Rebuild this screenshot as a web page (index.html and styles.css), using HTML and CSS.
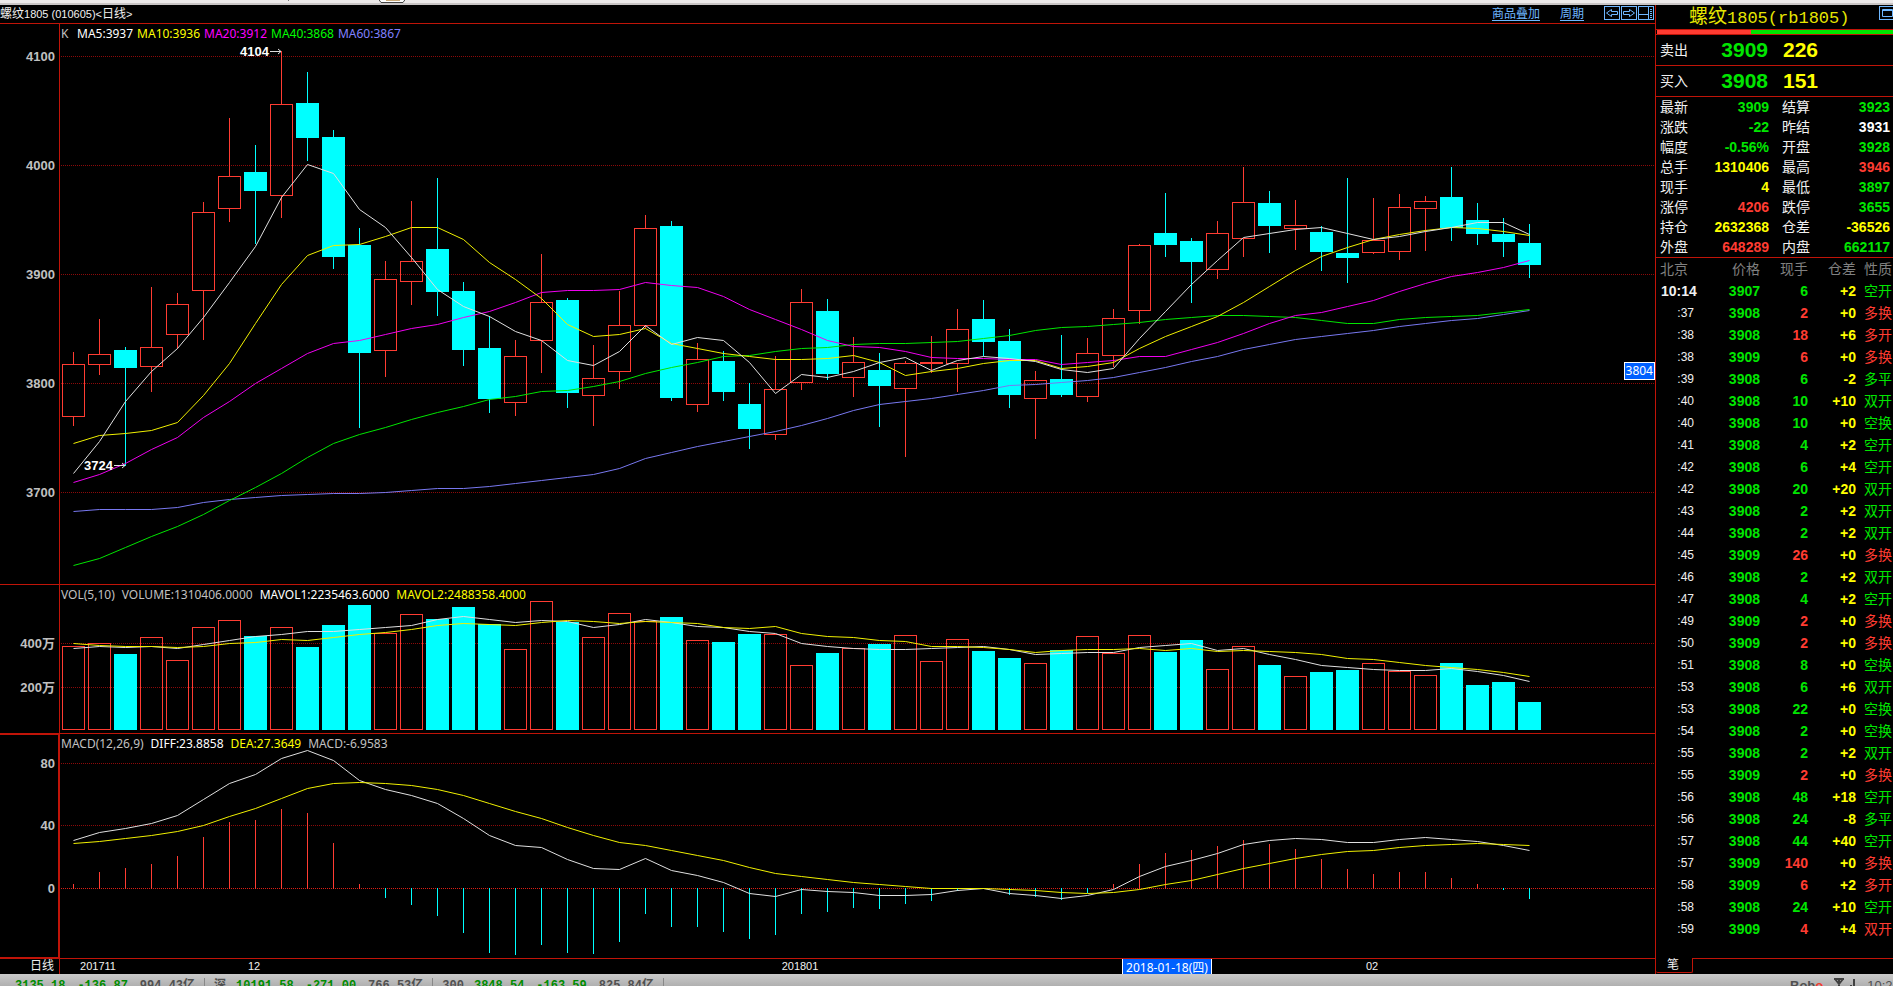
FILE: index.html
```html
<!DOCTYPE html>
<html lang="zh-CN">
<head>
<meta charset="utf-8">
<title>螺纹1805 日线</title>
<link rel="stylesheet" href="styles.css">
</head>
<body>
<div class="window-edge" aria-hidden="true">
  <svg class="edge-art" width="420" height="4">
    <rect class="edge-tick" x="288" y="0" width="1" height="1"/>
    <path class="edge-tab" d="M378.5 -1 L381 2.5 H403 L405.5 -1 Z"/>
    <rect class="edge-fill" x="386" y="0" width="14" height="1"/>
  </svg>
</div>

<div class="workspace">
  <main class="charts">
    <header class="chart-bar">
      <h1 class="chart-title">螺纹<span class="latin">1805 (010605)&lt;</span>日线<span class="latin">&gt;</span></h1>
      <nav class="chart-tools">
        <a class="tool-link" href="#overlay">商品叠加</a>
        <a class="tool-link" href="#period">周期</a>
        <div class="tool-icons">
          <button class="icon-button" type="button" aria-label="向左"><svg width="16" height="14"><rect x=".5" y=".5" width="15" height="13"/><path d="M7.5 3.5 L2.5 7 L7.5 10.5 V8.5 H13.5 V5.5 H7.5 Z"/></svg></button>
          <button class="icon-button" type="button" aria-label="向右"><svg width="16" height="14"><rect x=".5" y=".5" width="15" height="13"/><path d="M8.5 3.5 L13.5 7 L8.5 10.5 V8.5 H2.5 V5.5 H8.5 Z"/></svg></button>
          <button class="icon-button" type="button" aria-label="布局"><svg width="16" height="14"><rect x=".5" y=".5" width="15" height="13"/><path d="M10.5 0 V14 M0 8.5 H10 M12 3.5 H14 M12 5.5 H14 M12 7.5 H14 M12 9.5 H14 M12 11.5 H14"/></svg></button>
        </div>
      </nav>
    </header>

    <section class="pane pane-price" aria-label="K线">
      <svg class="plot" id="price"></svg>
      <p class="legend legend-tight"><span class="dim legend-k">K</span><span class="white">MA5:3937</span><span class="yellow">MA10:3936</span><span class="magenta">MA20:3912</span><span class="lime">MA40:3868</span><span class="violet">MA60:3867</span></p>
      <output class="price-tag">3804</output>
    </section>
    <section class="pane pane-volume" aria-label="成交量">
      <svg class="plot" id="volume"></svg>
      <p class="legend"><span class="dim">VOL(5,10)</span><span class="dim">VOLUME:1310406.0000</span><span class="white">MAVOL1:2235463.6000</span><span class="yellow">MAVOL2:2488358.4000</span></p>
    </section>
    <section class="pane pane-macd" aria-label="MACD">
      <svg class="plot" id="macd"></svg>
      <p class="legend"><span class="dim">MACD(12,26,9)</span><span class="white">DIFF:23.8858</span><span class="yellow">DEA:27.3649</span><span class="dim">MACD:-6.9583</span></p>
    </section>
    <footer class="timeline">
      <span class="timeline-unit">日线</span>
      <svg class="timeline-dates" id="dates"></svg>
    </footer>
  </main>

  <aside class="quote">
    <header class="quote-head">
      <h2 class="quote-title">螺纹<span class="quote-code">1805(rb1805)</span></h2>
      <button class="icon-button quote-window" type="button" aria-label="窗口"><svg width="16" height="14"><rect x=".5" y=".5" width="15" height="13"/><path d="M3.5 3.5 H13.5 V10.5 H3.5 Z M3 4.5 H14"/></svg></button>
    </header>
    <div class="ratio" aria-hidden="true"><div class="ratio-sell"></div><div class="ratio-buy"></div></div>
    <div class="level"><span class="level-name">卖出</span><span class="level-price green">3909</span><span class="level-size yellow">226</span></div>
    <div class="level"><span class="level-name">买入</span><span class="level-price green">3908</span><span class="level-size yellow">151</span></div>
    <table class="facts">
      <tbody>
        <tr><th>最新</th><td class="green">3909</td><th>结算</th><td class="green">3923</td></tr>
        <tr><th>涨跌</th><td class="green">-22</td><th>昨结</th><td class="white">3931</td></tr>
        <tr><th>幅度</th><td class="green">-0.56%</td><th>开盘</th><td class="green">3928</td></tr>
        <tr><th>总手</th><td class="yellow">1310406</td><th>最高</th><td class="red">3946</td></tr>
        <tr><th>现手</th><td class="yellow">4</td><th>最低</th><td class="green">3897</td></tr>
        <tr><th>涨停</th><td class="red">4206</td><th>跌停</th><td class="green">3655</td></tr>
        <tr><th>持仓</th><td class="yellow">2632368</td><th>仓差</th><td class="yellow">-36526</td></tr>
        <tr><th>外盘</th><td class="red">648289</td><th>内盘</th><td class="green">662117</td></tr>
      </tbody>
    </table>
    <div class="trades-wrap">
      <table class="trades">
        <colgroup><col class="col-time"><col class="col-price"><col class="col-size"><col class="col-diff"><col></colgroup>
        <thead><tr><th class="left">北京</th><th>价格</th><th>现手</th><th>仓差</th><th class="kind">性质</th></tr></thead>
        <tbody id="trades"></tbody>
      </table>
    </div>
    <footer class="quote-tabs"><button class="quote-tab" type="button">笔</button><div class="quote-tabs-rest"></div></footer>
  </aside>
</div>

<footer class="status">
  <div class="status-quotes">
    <span class="index"><span class="down">3135.18</span><span class="down">-136.87</span><span>994.43亿</span></span>
    <span class="index"><span class="index-name">深</span><span class="down">10191.58</span><span class="down">-271.00</span><span>766.53亿</span></span>
    <span class="index"><span class="index-name">300</span><span class="down">3848.54</span><span class="down">-163.59</span><span>825.84亿</span></span>
  </div>
  <div class="status-side">
    <b class="brand">Bob<span class="brand-accent">o</span></b>
    <svg class="signal" width="22" height="12"><path d="M0 1 H10 M1 1 L5 6 L9 1 M5 1 V12 M17 7 V12 M20 1 V12"/></svg>
    <time>10:21</time>
  </div>
</footer>
<script src="chart.js"></script>
</body>
</html>
```

FILE: styles.css
```css
:root {
  --frame: #c01408;
  --grid: #8c0a0a;
  --up: #ff3c32;
  --down: #00ffff;
  --green: #00e600;
  --yellow: #ffff00;
  --white: #f0f0f0;
  --dim: #c0c0c0;
  --link: #6fb7ff;
  --sans: "Liberation Sans", "Noto Sans CJK SC", sans-serif;
  --label: "Noto Sans", "Noto Sans CJK SC", sans-serif;
}

* { box-sizing: border-box; }

body {
  margin: 0;
  height: 100vh;
  display: grid;
  grid-template-rows: 5px minmax(0, 1fr) 12px;
  overflow: hidden;
  background: #000;
  color: var(--white);
  font: 12px/16px var(--sans);
}

h1, h2, p { margin: 0; font-weight: normal; }

button {
  padding: 0;
  border: 0;
  background: none;
  color: inherit;
  font: inherit;
}

.white { color: #fff; }
.yellow { color: var(--yellow); }
.magenta { color: #ff00ff; }
.lime { color: #00ff00; }
.violet { color: #8080ff; }
.dim { color: var(--dim); }
.green { color: var(--green); }
.red { color: var(--up); }

.window-edge { background: #ece9e9; border-bottom: 2px solid #c9c5c5; }
.edge-art { display: block; }
.edge-tick { fill: #777; }
.edge-tab { fill: #fff; stroke: #444; }
.edge-fill { fill: #c8a878; }

.workspace {
  display: grid;
  grid-template-columns: minmax(0, 1fr) 238px;
  min-height: 0;
}

.charts {
  display: grid;
  grid-template-rows: 19px minmax(0, 561fr) minmax(0, 149fr) minmax(0, 225fr) 15px;
  min-height: 0;
}

.chart-bar {
  display: flex;
  justify-content: space-between;
  border-bottom: 1px solid var(--frame);
}
.chart-title { font-size: 12px; line-height: 18px; white-space: nowrap; }
.latin { font-size: 11px; }
.chart-tools { display: flex; gap: 20px; padding-right: 1px; }
.tool-link { color: var(--link); line-height: 18px; text-underline-offset: 2px; }
.tool-icons { display: flex; gap: 1px; padding-top: 1px; }
.icon-button { display: block; height: 14px; }
.icon-button svg { display: block; fill: none; stroke: var(--link); }

.pane { position: relative; border-bottom: 1px solid var(--frame); }
.plot { position: absolute; left: 0; top: 0; width: 100%; height: 100%; }
.legend {
  position: relative;
  display: flex;
  gap: 7px;
  padding: 2px 0 0 61px;
  font-family: var(--label);
}
.legend-tight { gap: 4px; }
.legend-k { width: 12px; }
.price-tag {
  position: absolute;
  right: 0;
  top: 60.4%;
  border: 1px solid #fff;
  padding: 0 1px;
  background: #0060ff;
  color: #fff;
  font-family: var(--label);
}

.axis-label { fill: var(--dim); font: bold 13px var(--sans); text-anchor: end; }
.axis-line { fill: var(--frame); }
.grid-line { stroke: var(--grid); stroke-dasharray: 1 1; }
.grid-line.zero { stroke: #dc1e14; }
.up { fill: none; stroke: var(--up); }
.up-bar { fill: var(--up); }
.down-bar { fill: var(--down); }
.line { fill: none; stroke-width: 1; }
.line.l-white { stroke: #e0e0e0; }
.line.l-yellow { stroke: #f0f000; }
.line.l-magenta { stroke: #f000f0; }
.line.l-lime { stroke: #00e600; }
.line.l-violet { stroke: #7878f0; }
.mark { fill: #fff; font: bold 13px var(--sans); text-anchor: end; }
.mark-arrow { fill: none; stroke: #ddd; }

.timeline { display: flex; min-width: 0; }
.timeline-unit {
  flex: none;
  width: 60px;
  padding-right: 5px;
  border-right: 1px solid var(--frame);
  line-height: 15px;
  text-align: right;
}
.timeline-dates { flex: 1; min-width: 0; height: 15px; overflow: visible; }
.date { fill: var(--white); font: 11px var(--sans); text-anchor: middle; }
.cursor-box { fill: #0060ff; stroke: #fff; }
.cursor-date { fill: #fff; font: 12px var(--label); text-anchor: middle; }

.quote {
  display: flex;
  flex-direction: column;
  min-height: 0;
  border-left: 1px solid var(--frame);
}
.quote-head { display: flex; height: 24px; overflow: hidden; }
.quote-title {
  flex: 1;
  padding-left: 33px;
  color: #e6e600;
  font-size: 19px;
  line-height: 24px;
  white-space: nowrap;
}
.quote-code { font-family: "Liberation Mono", monospace; font-size: 17px; }
.quote-window { width: 14px; padding-top: 1px; flex: none; }
.ratio {
  display: flex;
  height: 6px;
  padding-left: 1px;
  border-top: 1px solid var(--frame);
  border-bottom: 1px solid var(--frame);
}
.ratio-sell { width: 40%; background: var(--up); }
.ratio-buy { flex: 1; background: var(--green); }

.level {
  display: grid;
  grid-template-columns: 28px 80px 1fr;
  align-items: center;
  height: 31px;
  padding-left: 4px;
  border-bottom: 1px solid var(--frame);
  font-size: 14px;
}
.level-price, .level-size { font-weight: bold; font-size: 21px; }
.level-price { text-align: right; }
.level-size { padding-left: 15px; }

.facts, .trades { width: 100%; border-collapse: collapse; table-layout: fixed; font-size: 14px; }
.facts th, .facts td, .trades th, .trades td { padding: 0; white-space: nowrap; }
.facts { border-bottom: 1px solid var(--frame); }
.facts tr { height: 20px; }
.facts th { width: 40px; padding-left: 4px; font-weight: normal; text-align: left; }
.facts th + td + th { width: 47px; padding-left: 13px; }
.facts td { font-weight: bold; text-align: right; }
.facts td:nth-child(2) { width: 73px; }
.facts td:last-child { padding-right: 3px; }

.trades-wrap { flex: 1; min-height: 0; overflow: hidden; }
.col-time { width: 56px; }
.col-price, .col-size, .col-diff { width: 48px; }
.trades tr { height: 22px; }
.trades th { color: #808080; font-weight: normal; text-align: right; }
.trades td { font-weight: bold; text-align: right; }
.trades th.left { padding-left: 4px; text-align: left; }
.trades td.time { padding-right: 18px; color: var(--white); font-size: 12px; font-weight: normal; }
.trades td.time-full { padding: 0 0 0 5px; font-size: 14px; font-weight: bold; text-align: left; }
.trades .kind { padding-left: 8px; font-weight: normal; text-align: left; }

.quote-tabs { display: flex; height: 16px; padding-bottom: 1px; }
.quote-tab {
  width: 37px;
  border-right: 1px solid var(--frame);
  border-bottom: 1px solid var(--frame);
  border-radius: 0 0 2px 2px;
  padding-right: 2px;
  line-height: 14px;
}
.quote-tabs-rest { flex: 1; border-top: 1px solid var(--frame); }

.status {
  display: flex;
  justify-content: space-between;
  overflow: hidden;
  padding-top: 4px;
  background: linear-gradient(#cacaca, #b0b0b0);
  color: #505050;
}
.status-quotes { display: flex; font: bold 12px/16px "Liberation Mono", "Noto Sans CJK SC", monospace; }
.index { display: flex; gap: 12px; padding: 0 9px; border-right: 1px solid #888; }
.index:first-child { padding-left: 15px; }
.index-name { margin-right: -2px; }
.down { color: #008c00; }
.status-side { display: flex; gap: 11px; width: 103px; flex: none; font-size: 13px; }
.brand-accent { color: #f03c32; }
.signal { flex: none; fill: none; stroke: #404040; stroke-width: 2; }
```

FILE: chart.js
```js
const SVG_NS = 'http://www.w3.org/2000/svg';
const AXIS = 59;        // x of the vertical axis line
const FIRST = 14;       // axis line to the first bar's centre
const SLOTS = 61;       // bar positions that fit in a pane
const HALF = 11;        // half of a bar's width

// Each bar: direction (1 = rise), high, body top, body bottom, low
const candles = [
  [1,352,364,417,426],[1,319,354,365,375],[0,347,350,368,466],[1,287,347,367,392],[1,293,304,335,349],
  [1,202,212,291,340],[1,118,176,209,222],[0,145,172,191,244],[1,51,104,196,218],[0,72,103,138,161],
  [0,130,137,257,269],[0,228,245,353,428],[1,261,279,351,377],[1,201,261,282,305],[0,178,249,292,316],
  [0,282,291,350,366],[0,316,348,399,413],[1,340,356,403,416],[1,254,302,341,373],[0,298,300,393,408],
  [1,345,378,396,426],[1,291,325,372,389],[1,215,228,326,328],[0,221,226,398,401],[1,343,359,405,412],
  [0,351,361,392,401],[0,383,404,429,449],[1,356,389,435,440],[1,289,302,383,390],[0,299,311,374,380],
  [1,337,362,378,397],[0,353,370,386,427],[1,361,363,389,457],[1,336,362,364,373],[1,309,329,364,392],
  [0,300,319,342,356],[0,329,341,395,408],[1,371,380,399,439],[0,335,379,395,397],[1,338,353,397,402],
  [1,309,318,356,367],[1,244,245,311,324],[0,193,233,245,257],[0,238,241,262,303],[1,221,233,270,279],
  [1,167,202,239,257],[0,191,203,226,253],[1,200,225,229,250],[0,226,232,252,271],[0,178,253,258,283],
  [1,198,240,253,254],[1,194,207,252,260],[1,196,201,209,251],[0,167,197,228,241],[0,203,220,234,245],
  [0,218,234,242,257],[0,224,243,265,278]
];

const averages = {
  violet: [511,509,509,509,507,502,499,497,495,494,493,493,492,490,488,488,486,483,480,477,474,468,458,452,446,441,436,431,425,418,410,404,401,398,394,390,385,384,382,380,377,372,367,361,356,349,344,339,336,333,330,326,323,320,318,314,310],
  lime: [565,558,547,536,526,514,500,487,473,457,443,434,427,419,412,406,399,396,391,390,386,381,373,367,362,356,355,351,348,347,344,343,343,342,341,338,335,330,327,326,324,322,319,317,315,315,316,317,320,323,323,319,317,316,315,312,309],
  magenta: [482,474,463,449,437,417,401,383,368,353,343,340,334,328,324,317,311,302,292,290,290,289,282,285,287,296,309,319,329,340,346,347,351,357,358,358,359,359,364,362,360,356,356,349,342,333,323,315,312,306,300,291,283,276,272,267,260],
  yellow: [443,435,433,430,422,395,363,323,284,255,245,244,236,227,227,239,262,279,298,324,336,334,328,343,348,353,356,359,359,358,355,362,375,371,368,363,360,360,368,366,362,348,336,326,316,302,286,270,256,247,239,234,230,227,228,231,235],
  white: [473,441,401,371,348,317,282,246,197,164,173,209,227,257,289,306,316,331,340,360,365,351,325,344,337,340,362,393,374,377,371,362,357,370,360,356,358,361,369,372,368,338,311,284,260,237,233,229,227,233,239,236,231,227,222,222,234]
};

const volumes = [646,643,654,637,660,627,620,636,627,647,625,605,633,614,619,607,624,649,601,622,637,613,621,617,640,642,634,634,665,653,648,644,635,661,639,651,658,663,650,636,653,635,652,640,669,646,665,676,672,670,663,671,675,663,685,682,702];

const volumeAverages = {
  white: [648,646,647,646,648,644,640,636,634,631,631,629,627,625,619,616,619,622,620,621,627,624,619,622,626,627,631,633,643,646,648,649,649,648,647,646,649,654,653,652,652,647,645,643,650,648,654,659,665,667,669,670,670,668,671,675,681],
  yellow: [643,645,646,646,647,646,643,642,639,640,637,634,632,629,625,623,624,625,622,620,621,623,621,622,623,627,628,626,633,636,637,640,641,646,646,647,649,652,650,649,649,648,650,648,651,650,651,652,654,658,659,662,665,667,669,672,676]
};

const macdBars = [884,872,868,864,856,837,822,820,809,813,843,884,898,905,916,933,953,955,945,953,954,942,914,927,927,932,939,935,914,912,908,909,904,901,891,888,895,897,900,893,884,864,853,850,846,840,844,849,859,869,874,872,872,878,884,890,899];

const macdLines = {
  white: [840,832,828,823,815,799,783,774,758,750,760,780,789,795,803,818,835,845,847,859,868,869,858,870,875,882,893,896,889,891,892,895,895,894,890,888,893,895,898,895,889,876,866,860,853,844,840,838,839,842,842,839,837,839,841,845,850],
  yellow: [843,841,838,835,831,825,816,808,798,788,783,782,783,785,789,795,803,811,818,827,835,842,845,850,855,860,867,873,876,879,882,884,886,888,888,888,889,890,892,893,892,889,884,880,874,868,863,858,854,851,850,847,845,844,843,844,845]
};

// time, price, size, open-interest change, kind, direction (u/d)
const trades = `10:14 3907 6 +2 空开 d
:37 3908 2 +0 多换 u
:38 3908 18 +6 多开 u
:38 3909 6 +0 多换 u
:39 3908 6 -2 多平 d
:40 3908 10 +10 双开 d
:40 3908 10 +0 空换 d
:41 3908 4 +2 空开 d
:42 3908 6 +4 空开 d
:42 3908 20 +20 双开 d
:43 3908 2 +2 双开 d
:44 3908 2 +2 双开 d
:45 3909 26 +0 多换 u
:46 3908 2 +2 双开 d
:47 3908 4 +2 空开 d
:49 3909 2 +0 多换 u
:50 3909 2 +0 多换 u
:51 3908 8 +0 空换 d
:53 3908 6 +6 双开 d
:53 3908 22 +0 空换 d
:54 3908 2 +0 空换 d
:55 3908 2 +2 双开 d
:55 3909 2 +0 多换 u
:56 3908 48 +18 空开 d
:56 3908 24 -8 多平 d
:57 3908 44 +40 空开 d
:57 3909 140 +0 多换 u
:58 3909 6 +2 多开 u
:58 3908 24 +10 空开 d
:59 3909 4 +4 双开 u`;

function add(parent, name, attributes, text) {
  const node = document.createElementNS(SVG_NS, name);
  for (const key in attributes) node.setAttribute(key, attributes[key]);
  if (text !== undefined) node.textContent = text;
  parent.appendChild(node);
  return node;
}

// A pane maps plot units (origin..origin+span) on to its own height.
function pane(id, origin, span) {
  const svg = document.getElementById(id);
  svg.replaceChildren();
  const width = svg.clientWidth;
  const scale = svg.clientHeight / span;
  const step = Math.floor((width - AXIS) / SLOTS);
  return {
    svg,
    width,
    height: svg.clientHeight,
    x: i => AXIS + FIRST + i * step,
    y: v => Math.round((v - origin) * scale)
  };
}

function rect(p, cls, x, y, width, height) {
  add(p.svg, 'rect', { class: cls, x, y, width, height: Math.max(height, 1) });
}

function gridLine(p, value, label, cls) {
  const y = p.y(value);
  add(p.svg, 'line', { class: 'grid-line ' + (cls || ''), x1: AXIS + 2, x2: p.width, y1: y + 0.5, y2: y + 0.5 });
  add(p.svg, 'text', { class: 'axis-label', x: AXIS - 4, y: y + 5 }, label);
}

function body(p, i, rise, top, bottom) {
  const x = p.x(i) - HALF;
  const width = HALF * 2 + 1;
  if (rise) {
    add(p.svg, 'rect', { class: 'up', x: x + 0.5, y: top + 0.5, width: width - 1, height: Math.max(bottom - top - 1, 1) });
  } else {
    rect(p, 'down-bar', x, top, width, bottom - top);
  }
}

function lines(p, set) {
  for (const color in set) {
    const points = set[color].map((v, i) => (p.x(i) + 0.5) + ',' + (p.y(v) + 0.5)).join(' ');
    add(p.svg, 'polyline', { class: 'line l-' + color, points });
  }
}

function mark(p, i, value, text) {
  const x = p.x(i);
  const y = p.y(value);
  add(p.svg, 'text', { class: 'mark', x: x - 12, y: y + 5 }, text);
  add(p.svg, 'path', { class: 'mark-arrow', d: `M${x - 11} ${y + 0.5} H${x} M${x - 3} ${y - 2} L${x} ${y + 0.5} L${x - 3} ${y + 3}` });
}

function drawPrice() {
  const p = pane('price', 24, 560);
  [[56,4100],[165,4000],[274,3900],[383,3800],[492,3700]].forEach(g => gridLine(p, g[0], g[1]));
  candles.forEach(([rise, high, top, bottom, low], i) => {
    const cls = rise ? 'up-bar' : 'down-bar';
    const [h, t, b, l] = [high, top, bottom, low].map(p.y);
    rect(p, cls, p.x(i), h, 1, t - h);
    rect(p, cls, p.x(i), b, 1, l - b);
    body(p, i, rise, t, b);
  });
  lines(p, averages);
  mark(p, 8, 51, '4104');
  mark(p, 2, 465, '3724');
  rect(p, 'axis-line', AXIS, 0, 1, p.height);
}

function drawVolume() {
  const p = pane('volume', 585, 148);
  gridLine(p, 643, '400万');
  gridLine(p, 687, '200万');
  volumes.forEach((top, i) => body(p, i, candles[i][0], p.y(top), p.y(730)));
  lines(p, volumeAverages);
  rect(p, 'axis-line', AXIS, 0, 1, p.height);
}

function drawMacd() {
  const p = pane('macd', 734, 224);
  gridLine(p, 763, '80');
  gridLine(p, 825, '40');
  gridLine(p, 888, '0', 'zero');
  macdBars.forEach((end, i) => {
    if (end < 888) rect(p, 'up-bar', p.x(i), p.y(end), 1, p.y(889) - p.y(end));
    if (end > 888) rect(p, 'down-bar', p.x(i), p.y(888), 1, p.y(end) - p.y(888));
  });
  lines(p, macdLines);
  rect(p, 'axis-line', 0, 0, AXIS, 1);
  rect(p, 'axis-line', AXIS - 1, 0, 2, p.height);
  rect(p, 'axis-line', 0, p.height - 1, AXIS, 1);
}

function drawDates() {
  const svg = document.getElementById('dates');
  svg.replaceChildren();
  const step = Math.floor((svg.clientWidth + 1) / SLOTS);
  const x = i => FIRST - 1 + i * step;
  [[1,'201711'],[7,'12'],[28,'201801'],[50,'02']].forEach(([i, text]) => {
    add(svg, 'text', { class: 'date', x: x(i) - 1, y: 11 }, text);
  });
  add(svg, 'rect', { class: 'cursor-box', x: x(42) - 42.5, y: -0.5, width: 89, height: 20 });
  add(svg, 'text', { class: 'cursor-date', x: x(42) + 2, y: 13 }, '2018-01-18(四)');
}

function fillTrades() {
  document.getElementById('trades').innerHTML = trades.split('\n').map(row => {
    const [time, price, size, diff, kind, dir] = row.split(' ');
    const color = dir === 'u' ? 'red' : 'green';
    const full = time.length > 3 ? ' time-full' : '';
    return `<tr><td class="time${full}">${time}</td><td class="green">${price}</td><td class="${color}">${size}</td><td class="yellow">${diff}</td><td class="kind ${color}">${kind}</td></tr>`;
  }).join('');
}

function draw() {
  drawPrice();
  drawVolume();
  drawMacd();
  drawDates();
}

fillTrades();
draw();
window.addEventListener('resize', draw);
```
